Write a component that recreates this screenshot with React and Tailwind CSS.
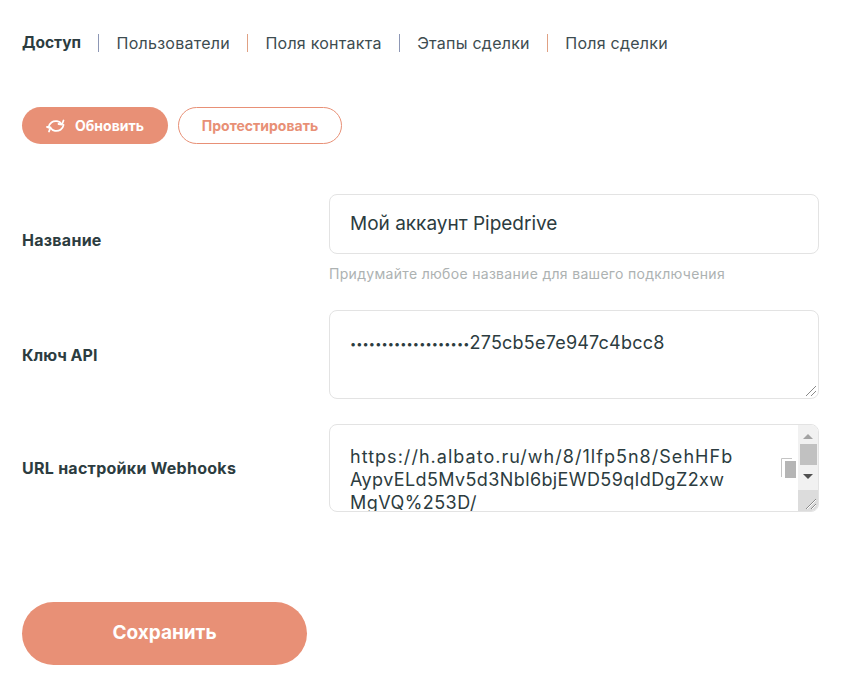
const font = { fontFamily: '"Inter", "Liberation Sans", sans-serif' };

function Grip({ className }) {
  return (
    <svg width="12" height="12" viewBox="0 0 12 12" className={className}>
      <path d="M1 11 L11 1 M6 11 L11 6" stroke="#8a8a8a" strokeWidth="1" fill="none" />
      <path d="M2 11 L11 2 M7 11 L11 7" stroke="#ffffff" strokeWidth="1" fill="none" />
    </svg>
  );
}

function Tab({ children, active, sep }) {
  return (
    <>
      <span className={active ? "font-bold text-[15.5px] text-[#2c3c40]" : "text-[16px] tracking-[0.25px] text-[#3d4c50]"}>{children}</span>
      {sep && <span className={`h-[18px] w-px mx-[17.25px] ${sep}`} />}
    </>
  );
}

function Row({ label, labelClass, className, children }) {
  return (
    <div className={`flex items-center ${className || ""}`}>
      <div className={`w-[307px] shrink-0 text-[16px] font-bold text-[#2c3c40] ${labelClass || ""}`}>{label}</div>
      {children}
    </div>
  );
}

export default function App() {
  return (
    <div className="w-[846px] h-[695px] bg-white pl-[22px] pt-[33px] overflow-hidden" style={font}>
      <div className="flex items-center h-[20px]">
        <Tab active sep="bg-[#8d97b5]">Доступ</Tab>
        <Tab sep="bg-[#e0a184]">Пользователи</Tab>
        <Tab sep="bg-[#8d97b5]">Поля контакта</Tab>
        <Tab sep="bg-[#e0a184]">Этапы сделки</Tab>
        <Tab>Поля сделки</Tab>
      </div>

      <div className="flex gap-[10px] mt-[54px]">
        <button className="w-[146px] h-[37px] rounded-full bg-[#e89076] text-white text-[14px] font-bold flex items-center justify-center gap-[9px]">
          <svg width="20" height="18" viewBox="0 0 20 18" fill="none" stroke="#fff" strokeWidth="1.8" strokeLinecap="round" strokeLinejoin="round">
            <path d="M2.5 10.5 C3 6 7 3.5 11 4.2 C13 4.6 14.5 5.6 15.5 7" />
            <path d="M17.5 3.5 L16 7.5 L12.5 7" />
            <path d="M17.5 8 C17 12 13 14.5 9 13.8 C7 13.4 5.5 12.4 4.5 11" />
            <path d="M1 10 L4.5 10.5 L3 14.5" />
          </svg>
          Обновить
        </button>
        <button className="w-[164px] h-[37px] rounded-full border border-[#e89076] bg-white text-[#e89076] text-[14px] font-bold">
          Протестировать
        </button>
      </div>

      <Row label="Название" labelClass="pt-[3px] tracking-[0.27px]" className="mt-[50px]">
        <div>
          <div className="w-[490px] h-[60px] rounded-[8px] border border-[#e3e3e3] pl-[20px] flex items-center text-[19px] text-[#2c3c40]">
            Мой аккаунт Pipedrive
          </div>
          <div className="mt-[11px] text-[14px] tracking-[0.31px] leading-[18px] text-[#adb2b2]">
            Придумайте любое название для вашего подключения
          </div>
        </div>
      </Row>

      <Row label="Ключ API" labelClass="pt-[1px]" className="mt-[27px]">
        <div className="relative w-[490px] h-[89px] rounded-[8px] border border-[#e3e3e3] pl-[20px] pt-[20px] text-[18px] tracking-[0.22px] leading-[24px] text-[#2c3c40]">
          <span className="text-[11px] tracking-[0.1px] align-[1px]">•••••••••••••••••••</span>275cb5e7e947c4bcc8
          <Grip className="absolute right-[1px] bottom-[1px]" />
        </div>
      </Row>

      <Row label="URL настройки Webhooks" labelClass="pb-[1px] tracking-[0.27px]" className="mt-[25px]">
        <div className="relative w-[490px] h-[88px] rounded-[8px] border border-[#e3e3e3] overflow-hidden pl-[20px] pt-[20px] text-[18px] leading-[23px] text-[#2c3c40]">
          <div className="tracking-[1.03px]">https://h.albato.ru/wh/8/1lfp5n8/SehHFb</div>
          <div className="tracking-[0.39px]">AypvELd5Mv5d3Nbl6bjEWD59qIdDgZ2xw</div>
          <div className="tracking-[0.45px]">MgVQ%253D/</div>
          <svg width="16" height="22" viewBox="0 0 16 22" className="absolute right-[21px] top-[33px]">
            <path d="M0.5 19 V0.5 H11" fill="none" stroke="#c4c4c4" strokeWidth="1" />
            <rect x="4" y="3" width="11" height="17" fill="#b5b5b5" />
          </svg>
          <div className="absolute right-0 top-0 bottom-0 w-[20px] bg-[#f1f1f1] flex flex-col items-center">
            <svg width="10" height="5" viewBox="0 0 10 5" className="mt-[9px]"><path d="M0 5 L5 0 L10 5 Z" fill="#a3a3a3" /></svg>
            <div className="w-[17px] h-[21px] bg-[#c1c1c1] mt-[5px]" />
            <svg width="10" height="5" viewBox="0 0 10 5" className="mt-[9px]"><path d="M0 0 L5 5 L10 0 Z" fill="#505050" /></svg>
            <div className="mt-auto w-full h-[21px] bg-[#dcdcdc]" />
          </div>
          <Grip className="absolute right-[1px] bottom-[1px]" />
        </div>
      </Row>

      <button className="mt-[90px] w-[285px] h-[63px] rounded-full bg-[#e89076] text-white text-[19px] font-bold">
        Сохранить
      </button>
    </div>
  );
}
